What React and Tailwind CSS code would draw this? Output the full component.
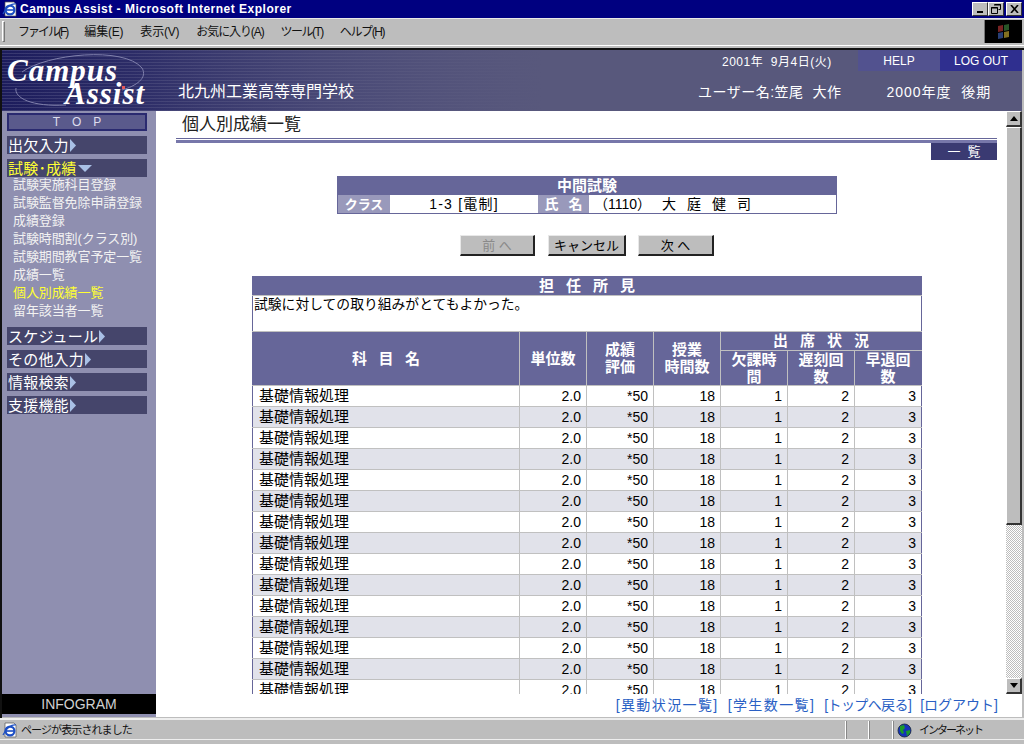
import React from "react";

const jp = { fontFamily: '"Liberation Sans", "Noto Sans CJK JP", sans-serif' };

const menus = [
  { label: "ファイル(F)", cls: "tracking-[-2px]" },
  { label: "編集(E)", cls: "tracking-[-0.2px]" },
  { label: "表示(V)", cls: "tracking-[-0.2px]" },
  { label: "お気に入り(A)", cls: "tracking-[-1.1px]" },
  { label: "ツール(T)", cls: "tracking-[-1.5px]" },
  { label: "ヘルプ(H)", cls: "tracking-[-1.4px]" },
];
const subMenus = [
  "試験実施科目登録",
  "試験監督免除申請登録",
  "成績登録",
  "試験時間割(クラス別)",
  "試験期間教官予定一覧",
  "成績一覧",
  "個人別成績一覧",
  "留年該当者一覧",
];
const links = [
  { label: "[異動状況一覧]", cls: "tracking-[1.4px]" },
  { label: "[学生数一覧]", cls: "tracking-[1.4px]" },
  { label: "[トップへ戻る]", cls: "tracking-[-0.6px]" },
  { label: "[ログアウト]", cls: "tracking-[0px]" },
];
const rows = Array.from({ length: 16 }, (_, i) => i);

const IeIcon = ({ size = 16 }) => (
  <svg width={size} height={size} viewBox="0 0 16 16">
    <path d="M3 1h9l2 2v12H3z" fill="#fff" stroke="#555" strokeWidth="0.7" />
    <circle cx="8" cy="9" r="4.4" fill="none" stroke="#1d4fc4" strokeWidth="2.2" />
    <path d="M4 9h8" stroke="#1d4fc4" strokeWidth="1.6" />
    <path d="M1 13C4 6 10 2 14 3" fill="none" stroke="#1d4fc4" strokeWidth="1.2" />
  </svg>
);

const Globe = () => (
  <svg width="15" height="15" viewBox="0 0 15 15">
    <circle cx="7.5" cy="7.5" r="6.5" fill="#1533b8" stroke="#123" strokeWidth="0.8" />
    <path d="M3 3l4-1 1 3-2 2 1 3-2 1-2-3zM9 8l4-1 0 3-3 3z" fill="#1a9a2a" />
  </svg>
);

const WinBtn = ({ children }) => (
  <div className="w-4 h-[14px] bg-[#bdbdbd] border-t border-l border-white border-r border-b border-r-[#333] border-b-[#333] flex items-center justify-center">
    {children}
  </div>
);

const ScrollBtn = ({ up }) => (
  <div className="h-4 w-4 bg-[#bdbdbd] border-t border-l border-white border-r-2 border-b-2 border-r-[#333] border-b-[#333] flex items-center justify-center shrink-0">
    <svg width="8" height="5" viewBox="0 0 8 5">
      <path d={up ? "M4 0l4 5H0z" : "M4 5L0 0h8z"} fill="#000" />
    </svg>
  </div>
);

const Arrow = ({ down }) => (
  <svg width={down ? 14 : 6} height={down ? 7 : 13} viewBox={down ? "0 0 14 7" : "0 0 6 13"} className="shrink-0">
    <path d={down ? "M0 0h14L7 7z" : "M0 0l6 6.5L0 13z"} fill="#a9c0e6" />
  </svg>
);

const SideItem = ({ label, active, down }) => (
  <div
    className={`h-[18px] flex items-center gap-px pl-[1px] bg-[#45456b] text-[15px] leading-none tracking-[0.2px] ${
      active ? "text-[#ffff33]" : "text-white"
    }`}
  >
    <span>{label}</span>
    <Arrow down={down} />
  </div>
);

const Btn = ({ label, width, disabled }) => (
  <button
    className={`h-[21px] bg-[#bdbdbd] border-t border-l border-[#e8e8e8] border-r-2 border-b-2 border-r-[#222] border-b-[#222] text-[13px] leading-none ${
      disabled ? "text-[#8a8a8a]" : "text-black"
    } ${width}`}
  >
    {label}
  </button>
);

const App = () => {
  return (
    <div className="w-[1024px] h-[744px] overflow-hidden flex flex-col bg-[#bdbdbd] text-black" style={jp}>
      {/* title bar */}
      <div className="h-[18px] bg-[#000080] flex items-center pl-[2px] pr-[2px] shrink-0">
        <IeIcon />
        <span className="ml-[2px] text-white font-bold text-[12px] tracking-[0.5px] whitespace-nowrap">
          Campus Assist - Microsoft Internet Explorer
        </span>
        <div className="ml-auto flex items-center">
          <WinBtn>
            <div className="w-[6px] h-[2px] bg-black mt-[6px]" />
          </WinBtn>
          <WinBtn>
            <svg width="10" height="10" viewBox="0 0 10 10">
              <path d="M3.5 .5h6v5h-2M.5 3.5h6v6h-6z" fill="none" stroke="#000" />
              <path d="M3 1h7M0 4h7" stroke="#000" />
            </svg>
          </WinBtn>
          <div className="w-[2px]" />
          <WinBtn>
            <svg width="9" height="8" viewBox="0 0 9 8">
              <path d="M1 0l7 8M8 0L1 8" stroke="#000" strokeWidth="1.6" />
            </svg>
          </WinBtn>
        </div>
      </div>

      {/* menu bar */}
      <div className="h-[30px] shrink-0 border-t border-[#e8e8e8] flex flex-col">
        <div className="h-[25px] flex items-center pl-[2px] pr-[2px]">
          <div className="w-[3px] h-[21px] border-l border-t border-white border-r border-b border-r-[#777] border-b-[#777]" />
          <div className="flex items-center pl-[13px] gap-[17px] text-[12px] text-[#111]">
            {menus.map((m) => (
              <span key={m.label} className={`whitespace-nowrap ${m.cls}`}>{m.label}</span>
            ))}
          </div>
          <div className="ml-auto w-[38px] h-[23px] bg-black border-l border-[#777] flex items-center justify-center">
            <svg width="16" height="15" viewBox="0 0 16 15" className="opacity-70">
              <path d="M2 2l5-1v6l-5 1z" fill="#a33" />
              <path d="M8 1l5-1v6l-5 1z" fill="#3a7a3a" />
              <path d="M2 9l5-1v6l-5 1z" fill="#3a5aa8" />
              <path d="M8 8l5-1v6l-5 1z" fill="#b8a030" />
            </svg>
          </div>
        </div>
        <div className="h-[1px] mt-px bg-white" />
      </div>

      {/* browser viewport */}
      <div className="h-[670px] shrink-0 flex flex-col border-l-2 border-t-2 border-[#111] border-r-0 pr-[2px] bg-[#bdbdbd]">
        {/* page header */}
        <div className="h-[61px] shrink-0 flex text-white bg-[linear-gradient(90deg,transparent_0px,#58587c_540px),repeating-linear-gradient(0deg,#ffffff1f_0px,#ffffff1f_1px,transparent_1px,transparent_3px),linear-gradient(90deg,#1c1c5c_0px,#1e1e60_130px,#44447a_540px)]">
          <svg width="150" height="61" viewBox="0 0 150 61" className="shrink-0">
            <path d="M20 22C44 4 122 -4 140 18C146 28 134 36 120 40" fill="none" stroke="#8080ac" strokeWidth="1" />
            <path d="M14 38C12 48 30 57 64 55" fill="none" stroke="#8080ac" strokeWidth="1" />
            <text x="5" y="31" fill="#fff" fontFamily="'Liberation Serif', serif" fontStyle="italic" fontWeight="700" fontSize="31" letterSpacing="1">Campus</text>
            <text x="63" y="54" fill="#fff" fontFamily="'Liberation Serif', serif" fontStyle="italic" fontWeight="700" fontSize="31" letterSpacing="1">Assist</text>
            <rect x="120" y="36" width="3" height="3" fill="#e85a5a" />
          </svg>
          <div className="pl-[26px] pt-[31px] text-[16px] leading-[22px] whitespace-nowrap">北九州工業高等専門学校</div>
          <div className="ml-auto flex flex-col w-[324px]">
            <div className="h-[21px] flex items-stretch">
              <div className="flex-1 flex items-center pl-[24px] pt-[2px] text-[12px] tracking-[0.5px] whitespace-pre">
                2001年  9月4日(火)
              </div>
              <div className="w-[82px] bg-[#52528f] text-[12px] flex items-center justify-center">HELP</div>
              <div className="w-[82px] bg-[#2f2f8f] text-[12px] flex items-center justify-center">LOG OUT</div>
            </div>
            <div className="flex-1 flex items-center text-[14px] pt-[2px] whitespace-pre">
              <span className="tracking-[0.5px]">ユーザー名:笠尾  大作</span>
              <span className="ml-[45px] tracking-[1px]">2000年度  後期</span>
            </div>
          </div>
        </div>

        <div className="h-[606px] shrink-0 flex">
          {/* sidebar */}
          <div className="w-[154px] shrink-0 bg-[#8f8fb0] flex flex-col">
            <div className="pl-[5px] pr-[9px] pt-[2px] flex flex-col">
              <div className="h-[18px] border-2 border-[#2a2a70] bg-[#5a5a8c] text-[#dde] text-[12px] leading-none tracking-[12px] flex items-center justify-center pl-[12px]">
                TOP
              </div>
              <div className="mt-[5px]"><SideItem label="出欠入力" /></div>
              <div className="mt-[5px]"><SideItem label="試験･成績" active down /></div>
              <div className="-mt-px pl-[6px] pb-[7px] flex flex-col">
                {subMenus.map((s) => (
                  <div
                    key={s}
                    className={`h-[18px] flex items-center text-[13px] tracking-[-0.1px] whitespace-nowrap ${
                      s === "個人別成績一覧" ? "text-[#ffff33]" : "text-[#f2f2f2]"
                    }`}
                  >
                    {s}
                  </div>
                ))}
              </div>
              <div className="flex flex-col gap-[5px]">
                <SideItem label="スケジュール" />
                <SideItem label="その他入力" />
                <SideItem label="情報検索" />
                <SideItem label="支援機能" />
              </div>
            </div>
            <div className="mt-auto mb-[3px] h-[20px] bg-black text-[#d0d0d0] text-[14px] flex items-center justify-center leading-none">
              INFOGRAM
            </div>
          </div>

          {/* content */}
          <div className="flex-1 min-w-0 bg-white flex flex-col">
            <div className="h-[583px] flex">
              <div className="flex-1 min-w-0 overflow-hidden">
                <div className="pl-[26px] h-[27px] flex items-center text-[17px] leading-none text-[#222]">個人別成績一覧</div>
                <div className="ml-[20px] mr-[9px]">
                  <div className="h-[1px] bg-[#666699]" />
                  <div className="h-[3px] mt-[1px] bg-[#7777aa]" />
                  <div className="flex justify-end">
                    <div className="w-[66px] h-[17px] bg-[#3a3a72] text-white text-[13px] leading-none flex items-center justify-center tracking-[7px] pl-[7px]">
                      一覧
                    </div>
                  </div>
                </div>

                {/* exam info */}
                <div className="mt-[16px] ml-[181px] w-[500px] border-b border-l border-r border-[#666699]">
                  <div className="h-[19px] bg-[#666699] text-white font-bold text-[15px] leading-none flex items-center justify-center">中間試験</div>
                  <div className="h-[18px] flex items-center text-[14px] leading-none">
                    <div className="w-[52px] h-full bg-[#9999bb] text-white font-bold text-[13px] flex items-center justify-center">クラス</div>
                    <div className="w-[148px] text-center tracking-[1.2px] whitespace-nowrap">1-3 [電制]</div>
                    <div className="w-[51px] h-full bg-[#9999bb] text-white font-bold flex items-center justify-center text-[14px] tracking-[10px] pl-[10px] whitespace-nowrap">氏名</div>
                    <div className="pl-[5px] flex gap-[11px] whitespace-nowrap">
                      <span>（1110）</span>
                      <span>大</span>
                      <span>庭</span>
                      <span>健</span>
                      <span>司</span>
                    </div>
                  </div>
                </div>

                <div className="mt-[21px] ml-[304px] flex">
                  <Btn label="前 へ" width="w-[75px]" disabled />
                  <div className="w-[13px]" />
                  <Btn label="キャンセル" width="w-[78px]" />
                  <div className="w-[12px]" />
                  <Btn label="次 へ" width="w-[76px]" />
                </div>

                {/* result table */}
                <table className="mt-[20px] ml-[96px] w-[670px] table-fixed border-collapse text-[14px]">
                  <colgroup>
                    <col className="w-[267px]" />
                    <col className="w-[67px]" />
                    <col className="w-[67px]" />
                    <col className="w-[67px]" />
                    <col className="w-[67px]" />
                    <col className="w-[67px]" />
                    <col className="w-[67px]" />
                  </colgroup>
                  <tbody>
                    <tr className="h-[19px]">
                      <td colSpan="7" className="bg-[#666699] text-white font-bold text-[15px] leading-none text-center tracking-[12px] border-x border-[#666699] border-b border-b-[#c0c0c0] p-0 pl-[12px]">
                        担任所見
                      </td>
                    </tr>
                    <tr className="h-[36px]">
                      <td colSpan="7" className="align-top text-[13.8px] leading-[18px] pl-[1px] border-x border-[#666699] border-b border-b-[#c0c0c0] whitespace-nowrap">
                        試験に対しての取り組みがとてもよかった。
                      </td>
                    </tr>
                    <tr className="h-[19px] bg-[#666699] text-white font-bold leading-none text-center">
                      <td rowSpan="2" className="border border-[#c0c0c0] border-l-[#666699] tracking-[11.5px] pl-[11.5px] p-0 text-[15px]">科目名</td>
                      <td rowSpan="2" className="border border-[#c0c0c0] p-0 text-[15px]">単位数</td>
                      <td rowSpan="2" className="border border-[#c0c0c0] p-0 text-[15px] leading-[17px]">成績<br />評価</td>
                      <td rowSpan="2" className="border border-[#c0c0c0] p-0 text-[15px] leading-[17px]">授業<br />時間数</td>
                      <td colSpan="3" className="border border-[#c0c0c0] border-r-[#666699] p-0 pl-[12px] tracking-[12px] text-[15px]">出席状況</td>
                    </tr>
                    <tr className="h-[35px] bg-[#666699] text-white font-bold leading-[17px] text-center text-[15px]">
                      <td className="border border-[#c0c0c0] p-0">欠課時<br />間</td>
                      <td className="border border-[#c0c0c0] p-0">遅刻回<br />数</td>
                      <td className="border border-[#c0c0c0] border-r-[#666699] p-0">早退回<br />数</td>
                    </tr>
                    {rows.map((r) => (
                      <tr key={r} className={`h-[21px] ${r % 2 ? "bg-[#e1e2ea]" : "bg-white"}`}>
                        <td className="border border-[#c0c0c0] border-l-[#666699] pl-[6px] p-0 text-[15px] leading-none whitespace-nowrap">基礎情報処理</td>
                        <td className="border border-[#c0c0c0] text-right pr-[5px] p-0 leading-none">2.0</td>
                        <td className="border border-[#c0c0c0] text-right pr-[5px] p-0 leading-none">*50</td>
                        <td className="border border-[#c0c0c0] text-right pr-[5px] p-0 leading-none">18</td>
                        <td className="border border-[#c0c0c0] text-right pr-[5px] p-0 leading-none">1</td>
                        <td className="border border-[#c0c0c0] text-right pr-[5px] p-0 leading-none">2</td>
                        <td className="border border-[#c0c0c0] border-r-[#666699] text-right pr-[5px] p-0 leading-none">3</td>
                      </tr>
                    ))}
                  </tbody>
                </table>
              </div>

              {/* scrollbar */}
              <div className="w-4 shrink-0 flex flex-col bg-[repeating-conic-gradient(#bdbdbd_0_25%,#ffffff_0_50%)] bg-[length:2px_2px]">
                <ScrollBtn up />
                <div className="h-[398px] bg-[#bdbdbd] border-t border-l border-white border-r-2 border-b-2 border-r-[#333] border-b-[#333]" />
                <div className="flex-1" />
                <ScrollBtn />
              </div>
            </div>
            <div className="flex-1 flex items-center justify-end pr-[24px] text-[14px] text-[#2a5fc4] whitespace-nowrap gap-[9px]">
              {links.map((l) => (
                <span key={l.label} className={l.cls}>{l.label}</span>
              ))}
            </div>
          </div>
        </div>
      </div>

      {/* status bar */}
      <div className="flex-1 border-t-2 border-[#eee] flex flex-col">
        <div className="h-[19px] mt-[1px] flex items-stretch text-[11px] text-[#111] border-b border-[#eee]">
          <div className="w-[846px] flex items-center pl-[2px] gap-[3px] border-r border-white tracking-[-0.9px]">
            <IeIcon />
            <span>ページが表示されました</span>
          </div>
          <div className="w-[23px] border-l border-[#888] border-r border-r-white" />
          <div className="w-[24px] border-l border-[#888] border-r border-r-white" />
          <div className="flex-1 border-l border-[#888] flex items-center pl-[3px] gap-[7px] tracking-[-2px]">
            <Globe />
            <span>インターネット</span>
          </div>
        </div>
      </div>
    </div>
  );
};

export default App;
